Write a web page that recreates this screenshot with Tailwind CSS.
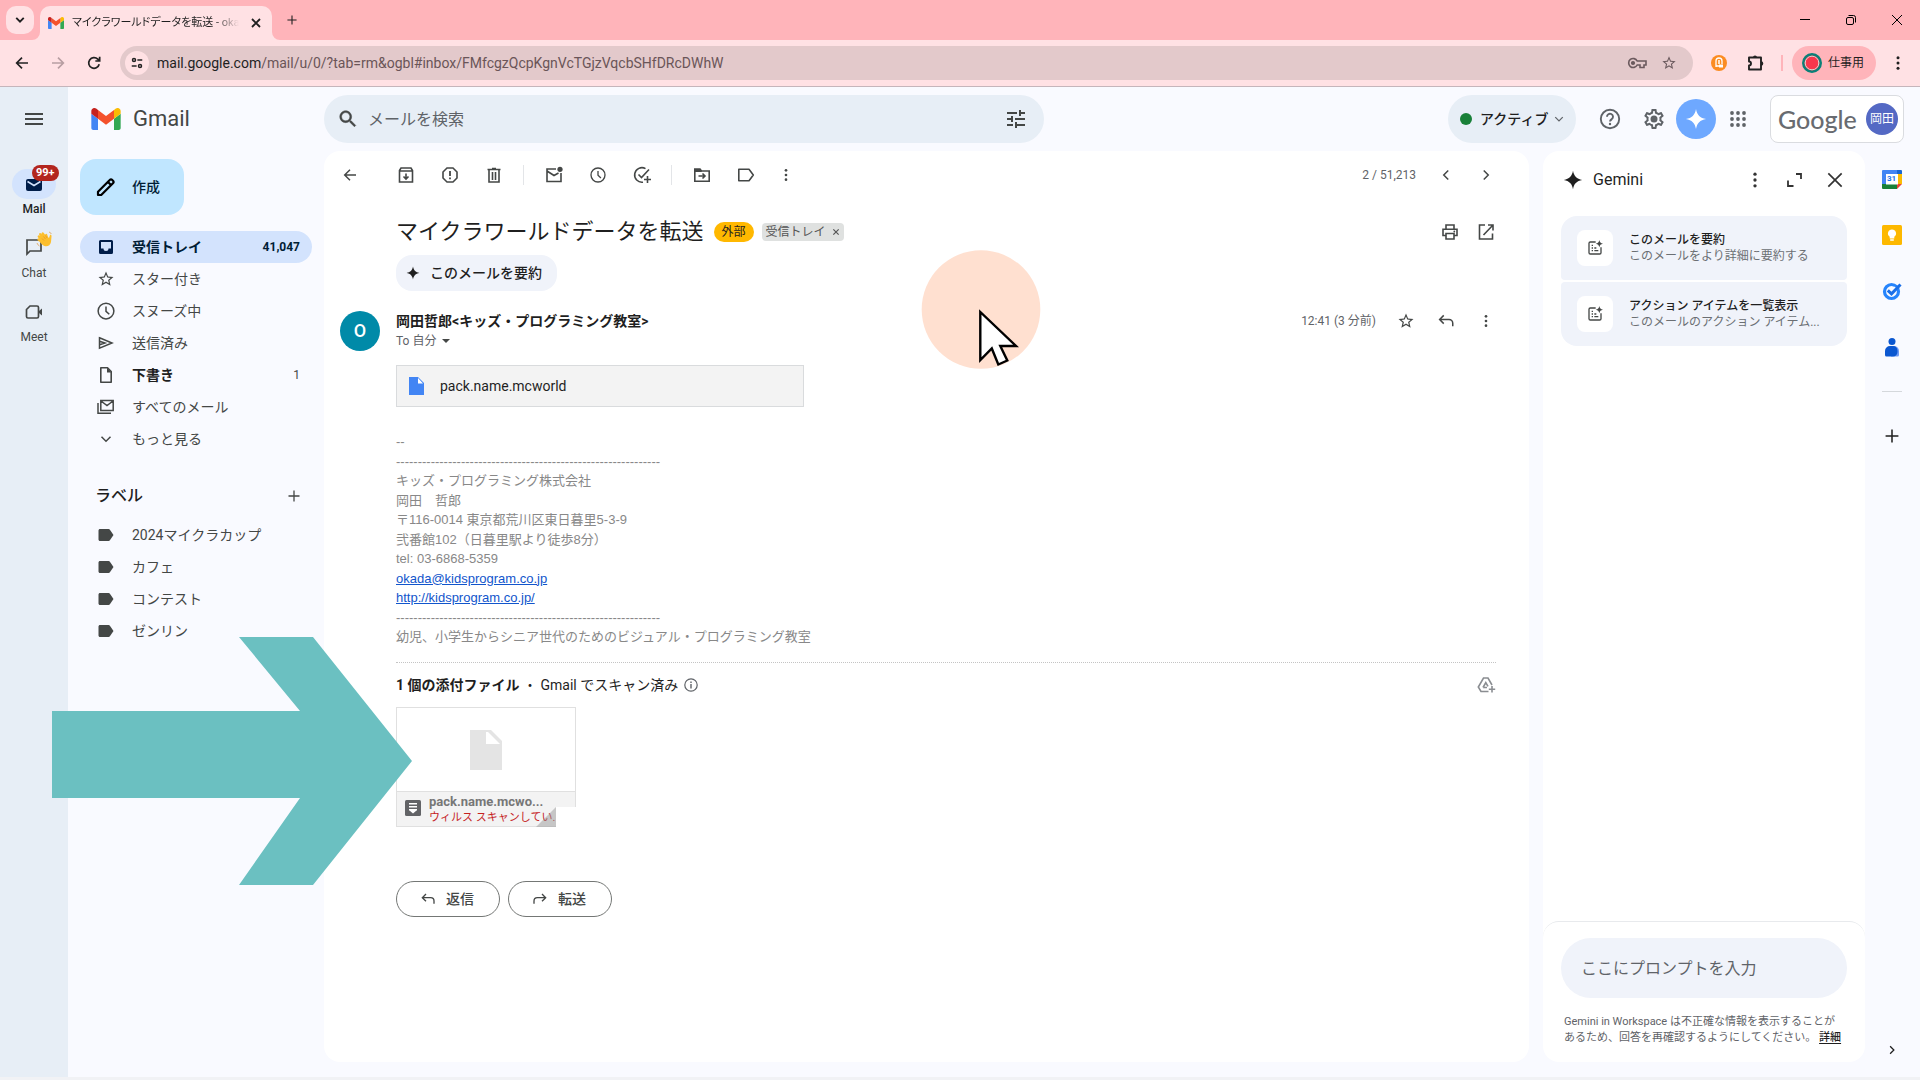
<!DOCTYPE html>
<html lang="ja">
<head>
  <meta charset="UTF-8" />
  <meta name="viewport" content="width=device-width, initial-scale=1.0" />
  <title>マイクラワールドデータを転送 - Gmail</title>
  <script src="https://cdn.jsdelivr.net/npm/@tailwindcss/browser@4"></script>
</head>
<body class="relative flex min-h-screen flex-col overflow-x-hidden bg-[#f9faff] [font-family:Roboto,'Noto_Sans_CJK_JP',sans-serif] text-sm text-[#1f1f1f]">

  <!-- Icon sprite -->
  <svg class="hidden" xmlns="http://www.w3.org/2000/svg">
    <symbol id="gmail" viewBox="52 42 88 66">
      <path fill="#4285f4" d="M58 108h14V74L52 59v43c0 3.32 2.69 6 6 6" />
      <path fill="#34a853" d="M120 108h14c3.32 0 6-2.69 6-6V59l-20 15" />
      <path fill="#fbbc04" d="M120 48v26l20-15v-8c0-7.42-8.47-11.65-14.4-7.2" />
      <path fill="#f4512c" d="M72 74V48l24 18 24-18v26L96 92" />
      <path fill="#c5221f" d="M52 51v8l20 15V48l-5.6-4.2c-5.94-4.45-14.4-.22-14.4 7.2" />
    </symbol>
    <symbol id="star" viewBox="0 0 24 24"><path fill="currentColor" d="M22 9.24l-7.19-.62L12 2 9.19 8.63 2 9.24l5.46 4.73L5.82 21 12 17.27 18.18 21l-1.63-7.03L22 9.24zM12 15.4l-3.76 2.27 1-4.28-3.32-2.88 4.38-.38L12 6.1l1.71 4.04 4.38.38-3.32 2.88 1 4.28L12 15.4z" /></symbol>
    <symbol id="dots" viewBox="0 0 24 24"><g fill="currentColor"><circle cx="12" cy="5" r="2" /><circle cx="12" cy="12" r="2" /><circle cx="12" cy="19" r="2" /></g></symbol>
    <symbol id="spark" viewBox="0 0 24 24"><path fill="currentColor" d="M12 1C13.2 7.6 16.4 10.8 23 12C16.4 13.2 13.2 16.4 12 23C10.8 16.4 7.6 13.2 1 12C7.6 10.8 10.8 7.6 12 1Z" /></symbol>
    <symbol id="clock" viewBox="0 0 24 24"><g fill="none" stroke="currentColor" stroke-width="2"><circle cx="12" cy="12" r="10.500" /><path d="M12 6v6.4l4.4 4" /></g></symbol>
    <symbol id="reply" viewBox="0 0 24 24"><path fill="none" stroke="currentColor" stroke-width="2" d="M9 4.5L3.5 10L9 15.5M3.8 10H16a5 5 0 0 1 5 5v4" /></symbol>
    <symbol id="plus" viewBox="0 0 24 24"><path fill="none" stroke="currentColor" stroke-width="2.600" d="M12 1v22M1 12h22" /></symbol>
    <symbol id="close" viewBox="0 0 24 24"><path fill="none" stroke="currentColor" stroke-width="2" d="M4 4l16 16M20 4L4 20" /></symbol>
    <symbol id="closebold" viewBox="0 0 24 24"><path fill="none" stroke="currentColor" stroke-width="3.600" d="M4 4l16 16M20 4L4 20" /></symbol>
    <symbol id="down" viewBox="0 0 24 24"><path fill="none" stroke="currentColor" stroke-width="3" d="M3 7.500l9 9l9-9" /></symbol>
    <symbol id="right" viewBox="0 0 24 24"><path fill="none" stroke="currentColor" stroke-width="3" d="M7.500 3L16.500 12l-9 9" /></symbol>
    <symbol id="back" viewBox="0 0 24 24"><path fill="none" stroke="currentColor" stroke-width="2.200" d="M21 12H4M12 4l-8 8l8 8" /></symbol>
    <symbol id="tag" viewBox="0 0 24 24"><path fill="currentColor" d="M4 4h11.500c.7 0 1.300.3 1.700.9L22 12l-4.800 7.100c-.4.6-1 .9-1.700.9H4c-1.100 0-2-.9-2-2V6c0-1.100.9-2 2-2z" /></symbol>
    <symbol id="note" viewBox="0 0 24 24"><path fill="none" stroke="currentColor" stroke-width="2" d="M13 3H5a2 2 0 0 0-2 2v14a2 2 0 0 0 2 2h14a2 2 0 0 0 2-2v-8M7 8h2M7 12h2M7 16h2M11 12h3M11 16h6" /><path fill="currentColor" d="M18.500 0c.7 3.600 1.900 4.800 5.500 5.500c-3.600.7-4.800 1.900-5.500 5.500c-.7-3.600-1.900-4.800-5.500-5.500c3.600-.7 4.800-1.900 5.500-5.500z" /></symbol>
  </svg>

  <!-- Tab strip -->
  <div class="flex h-10 items-end bg-[#ffb4ba]">
    <button aria-label="タブを検索" class="mb-1.5 ml-1.5 flex size-7 items-center justify-center rounded-[10px] bg-[#ffe1e4]">
      <svg class="size-2.5" viewBox="0 0 24 24"><path fill="none" stroke="currentColor" stroke-width="4.500" d="M3 7l9 9l9-9" /></svg>
    </button>
    <div class="relative ml-1.5 flex h-[34px] w-58 items-center rounded-t-[10px] bg-[#ffe1e4] pr-2 pl-2">
      <svg class="absolute bottom-0 -left-2 size-2 text-[#ffe1e4]" viewBox="0 0 8 8"><path fill="currentColor" d="M8 0v8H0a8 8 0 0 0 8-8z" /></svg>
      <svg class="absolute -right-2 bottom-0 size-2 text-[#ffe1e4]" viewBox="0 0 8 8"><path fill="currentColor" d="M0 0v8h8a8 8 0 0 1-8-8z" /></svg>
      <svg class="h-3 w-4"><use href="#gmail" /></svg>
      <span class="ml-2 w-[167px] overflow-hidden mask-r-from-85% text-[11px] leading-5 whitespace-nowrap [font-feature-settings:'palt']">マイクラワールドデータを転送 - okad</span>
      <button aria-label="タブを閉じる" class="ml-auto flex size-4 items-center justify-center"><svg class="size-3"><use href="#closebold" /></svg></button>
    </div>
    <button aria-label="新しいタブ" class="mb-3 ml-3 flex size-4 items-center justify-center"><svg class="size-2.5"><use href="#plus" /></svg></button>
    <div class="mb-3 ml-auto flex items-center gap-[30px] pr-[15px]">
      <button aria-label="最小化" class="size-4"><svg viewBox="0 0 16 16"><path stroke="#000" d="M3 7.500h10" /></svg></button>
      <button aria-label="元に戻す" class="size-4"><svg viewBox="0 0 16 16" fill="none" stroke="#000"><rect x="3.500" y="5.500" width="7" height="7" rx="1.500" /><path d="M5.500 3.500h5a2 2 0 0 1 2 2v5" /></svg></button>
      <button aria-label="閉じる" class="size-4"><svg viewBox="0 0 16 16"><path stroke="#000" d="M3 3l10 10M13 3L3 13" /></svg></button>
    </div>
  </div>

  <!-- Address bar -->
  <div class="flex h-[47px] items-center border-b border-[#c5b5bb] bg-[#ffe1e4]">
    <div class="flex gap-5 pr-[18px] pl-3.5">
      <button aria-label="戻る" class="size-4"><svg viewBox="0 0 24 24"><path fill="none" stroke="#222" stroke-width="2.500" d="M21 12H4M12 4l-8 8l8 8" /></svg></button>
      <button aria-label="進む" class="size-4"><svg viewBox="0 0 24 24"><path fill="none" stroke="#b89ea2" stroke-width="2.500" d="M3 12h17M12 4l8 8l-8 8" /></svg></button>
      <button aria-label="再読み込み" class="size-4"><svg viewBox="0 0 24 24"><path fill="none" stroke="#222" stroke-width="2.600" d="M19.800 14A8 8 0 1 1 17.700 6.300L20 8.500M20.500 2.500v6.500h-6.500" /></svg></button>
    </div>
    <div class="flex h-[34px] flex-1 items-center rounded-full bg-[#e3c9cb] pr-4 pl-[5px]">
      <button aria-label="サイト情報" class="flex size-6 items-center justify-center rounded-full bg-[#ffe1e4]">
        <svg class="size-3" viewBox="0 0 16 16" fill="none" stroke="#222" stroke-width="2"><circle cx="4" cy="4" r="2" /><path d="M8.500 4H15M1 12h6.500" /><circle cx="12" cy="12" r="2" /></svg>
      </button>
      <div class="ml-2 flex-1 text-sm text-[#6a5558]"><span class="text-[#1f1f1f]">mail.google.com</span>/mail/u/0/?tab=rm&amp;ogbl#inbox/FMfcgzQcpKgnVcTGjzVqcbSHfDRcDWhW</div>
      <button aria-label="パスワード" class="h-4 w-5"><svg viewBox="0 0 20 16" fill="none" stroke="#6b5a5e" stroke-width="1.600"><path d="M10.200 6A4.500 4.500 0 1 0 10.200 10H13v2.500h4V10h2V6z" /><circle cx="6" cy="8" r="1.300" fill="#6b5a5e" /></svg></button>
      <button aria-label="ブックマーク" class="ml-3.5 size-4 text-[#6b5a5e]"><svg class="size-4"><use href="#star" /></svg></button>
    </div>
    <div class="flex items-center pl-[18px]">
      <svg class="size-4" viewBox="0 0 16 16"><circle cx="8" cy="8" r="8" fill="#fb8c22" /><path fill="none" stroke="#fff" stroke-width="1.300" d="M5 12V6a3 3 0 0 1 6 0v3M7 6h2M7 8h2M5 11h4" /><path fill="#fff" d="M8 9.500h4v3H8z" /></svg>
      <button aria-label="拡張機能" class="ml-5 size-[18px]"><svg viewBox="0 0 18 18"><path fill="none" stroke="#222" stroke-width="1.900" stroke-linejoin="round" d="M2 3.500h12v12H2v-4a2 2 0 0 0 0-4z" /><path fill="#222" d="M6 3.500a2 2 0 0 1 4 0zM14 7.200a2.300 2.300 0 0 1 0 4.600z" /></svg></button>
      <span class="ml-4 h-4 w-0.5 bg-[#ffb4ba]"></span>
      <button class="ml-[9px] flex h-[34px] items-center rounded-full bg-[#ffb4ba] pr-3 pl-2.5 text-xs">
        <svg class="mr-1.5 size-5" viewBox="0 0 20 20"><circle cx="10" cy="10" r="8.800" fill="#f9364d" stroke="#0a8078" stroke-width="2.400" /><circle cx="10" cy="10" r="6.800" fill="none" stroke="#d9dcd6" stroke-width="1" /></svg>
        仕事用
      </button>
      <button aria-label="設定" class="mx-[13px] size-[18px]"><svg class="size-[18px]"><use href="#dots" /></svg></button>
    </div>
  </div>

  <div class="flex flex-1">
    <!-- App rail -->
    <nav class="flex w-17 shrink-0 flex-col items-center bg-[#e7eef6] text-xs leading-4 text-[#444746]">
      <button aria-label="メインメニュー" class="mt-[22px] h-5 w-6"><svg viewBox="0 0 24 20"><path stroke="#444746" stroke-width="2" d="M3 5h18M3 10h18M3 15h18" /></svg></button>
      <a href="#mail" class="relative mt-10 flex flex-col items-center font-medium text-[#1f1f1f]">
        <span class="flex h-[30px] w-11 items-center justify-center rounded-full bg-[#d3e3fd]">
          <svg class="h-4 w-4" viewBox="0 0 16 16"><path fill="#001d49" d="M2 3h12a2 2 0 0 1 2 2v8a2 2 0 0 1-2 2H2a2 2 0 0 1-2-2V5a2 2 0 0 1 2-2z" /><path fill="none" stroke="#d3e3fd" stroke-width="1.500" d="M1.500 5.500L8 9.500l6.500-4" /></svg>
        </span>
        <span class="absolute -top-1 left-5 rounded-full bg-[#b3261e] px-1 text-[11px] font-bold text-white">99+</span>
        <span class="mt-0.5">Mail</span>
      </a>
      <a href="#chat" class="relative mt-5 flex flex-col items-center">
        <svg class="size-5" viewBox="0 0 20 20"><path fill="none" stroke="#444746" stroke-width="1.700" d="M3 3h14v11H6l-3 3z" /></svg>
        <!-- Waving hand -->
        <svg class="absolute -top-1.5 left-3.5 size-4" viewBox="0 0 16 16"><g fill="none" stroke="#fcbf2d" stroke-width="2.300" stroke-linecap="round"><path d="M7 9L2.800 5.500M8 7.500L4.200 3.200M9.500 6.500L6.700 2.500M11.500 8L10.200 4M6 11L2.500 8.500" /></g><path fill="#fcbf2d" d="M5 9l5-4 3 2 1-3c1-.5 1.600.3 1.500 1.500L15 11c-.5 3-3 4.500-5.500 4.200C7 15 5.500 13 4 11z" /><path fill="none" stroke="#e08a1e" stroke-width=".6" d="M6 7.500l2 2M7.500 5.500l2 2.500M9.500 4.500l1.500 2.500M1 12q.5 2 2.500 3M13 1q1.800.5 2.300 2" /></svg>
        <span class="mt-2">Chat</span>
      </a>
      <a href="#meet" class="mt-[21px] flex flex-col items-center">
        <svg class="size-5" viewBox="0 0 20 20"><path fill="none" stroke="#444746" stroke-width="1.700" d="M6 4h7a1.500 1.500 0 0 1 1.500 1.500v9A1.500 1.500 0 0 1 13 16H4a1.500 1.500 0 0 1-1.500-1.500V7.500z" /><path fill="#444746" d="M15 9l3-2.500v7L15 11z" /></svg>
        <span class="mt-[7px]">Meet</span>
      </a>
    </nav>

    <div class="flex min-w-0 flex-1 flex-col">
      <!-- Header -->
      <header class="flex h-16 items-center pr-4">
        <a href="#inbox" class="flex w-64 shrink-0 items-center pl-[23px] text-[#444746]">
          <svg class="h-[22px] w-[30px]"><use href="#gmail" /></svg>
          <span class="ml-3 text-[22px] leading-6">Gmail</span>
        </a>
        <form class="flex h-12 w-[720px] items-center rounded-full bg-[#e7eef6] pr-4 pl-[13px] text-[#444746]">
          <button type="button" aria-label="検索" class="size-[22px]"><svg viewBox="0 0 24 24"><path fill="currentColor" stroke="currentColor" stroke-width=".5" d="M15.500 14h-.79l-.28-.27C15.410 12.590 16 11.110 16 9.500 16 5.910 13.090 3 9.500 3S3 5.910 3 9.500 5.910 16 9.500 16c1.610 0 3.090-.59 4.230-1.570l.27.28v.79l5 4.990L20.490 19l-4.990-5zm-6 0C7.010 14 5 11.990 5 9.500S7.010 5 9.500 5 14 7.010 14 9.500 11.990 14 9.500 14z" /></svg></button>
          <input type="text" aria-label="メールを検索" placeholder="メールを検索" class="ml-[9px] h-10 min-w-0 flex-1 text-base outline-none placeholder:text-[#5f6368]" />
          <button type="button" aria-label="検索オプション" class="size-6"><svg viewBox="0 0 24 24"><path fill="currentColor" d="M3 17v2h6v-2H3zM3 5v2h10V5H3zm10 16v-2h8v-2h-8v-2h-2v6h2zM7 9v2H3v2h4v2h2V9H7zm14 4v-2H11v2h10zm-6-4h2V7h4V5h-4V3h-2v6z" /></svg></button>
        </form>
        <div class="ml-auto flex items-center text-[#5f6368]">
          <button class="flex h-12 w-32 items-center rounded-full bg-[#e7eef6] pl-3 font-medium text-[#1f1f1f]">
            <span class="size-3 rounded-full bg-[#188038]"></span>
            <span class="ml-2">アクティブ</span>
            <svg class="ml-1.5 size-2.5 text-[#5f6368]"><use href="#down" /></svg>
          </button>
          <button aria-label="サポート" class="ml-3.5 flex size-10 items-center justify-center">
            <svg class="size-6" viewBox="0 0 24 24"><g fill="none" stroke="currentColor" stroke-width="1.900"><circle cx="12" cy="12" r="9.200" /><path d="M9 9.800a3 3 0 1 1 4.800 2.300c-1.100.8-1.800 1.300-1.800 2.500" /></g><circle cx="12" cy="17" r="1.200" fill="currentColor" /></svg>
          </button>
          <button aria-label="設定" class="ml-1 flex size-10 items-center justify-center">
            <svg class="size-6" viewBox="0 0 24 24" fill="currentColor"><path d="M19.430 12.980c.04-.32.07-.64.07-.98 0-.34-.03-.66-.07-.98l2.110-1.650c.19-.15.24-.42.12-.64l-2-3.460c-.09-.16-.26-.25-.44-.25-.06 0-.12.010-.17.030l-2.490 1c-.52-.4-1.080-.73-1.690-.98l-.38-2.650C14.460 2.180 14.250 2 14 2h-4c-.25 0-.46.180-.49.420l-.38 2.650c-.61.250-1.170.590-1.690.980l-2.490-1c-.06-.02-.12-.03-.18-.03-.17 0-.34.090-.43.250l-2 3.460c-.13.220-.07.490.12.640l2.110 1.650c-.04.320-.07.650-.07.980 0 .330.030.660.070.980l-2.110 1.650c-.19.150-.24.420-.12.640l2 3.460c.09.160.26.250.44.250.06 0 .12-.01.17-.03l2.490-1c.52.400 1.080.730 1.690.980l.38 2.650c.03.240.24.420.49.420h4c.25 0 .46-.18.49-.42l.38-2.650c.61-.25 1.170-.59 1.690-.98l2.490 1c.06.020.12.030.18.030.17 0 .34-.09.43-.25l2-3.460c.12-.22.07-.49-.12-.64l-2.110-1.650zm-1.980-1.710c.04.310.05.520.05.730 0 .210-.02.430-.05.730l-.14 1.130.89.700 1.080.840-.7 1.210-1.270-.51-1.040-.42-.9.680c-.43.320-.84.560-1.250.730l-1.060.430-.16 1.130-.2 1.350h-1.400l-.19-1.350-.16-1.130-1.060-.43c-.43-.18-.83-.41-1.230-.71l-.91-.7-1.060.430-1.270.510-.7-1.210 1.080-.84.890-.7-.14-1.130c-.03-.31-.05-.54-.05-.74s.02-.43.050-.73l.14-1.130-.89-.7-1.080-.84.7-1.210 1.270.510 1.040.420.9-.68c.43-.32.84-.56 1.250-.73l1.060-.43.16-1.130.2-1.350h1.390l.19 1.350.16 1.130 1.060.430c.43.180.83.410 1.230.710l.91.700 1.060-.43 1.270-.51.7 1.210-1.070.850-.89.700.14 1.130z" /><circle cx="12" cy="12" r="3.500" /></svg>
          </button>
          <button aria-label="Gemini に相談" class="ml-0.5 flex size-10 items-center justify-center rounded-full bg-[#6ea8ff] text-white"><svg class="size-[22px]"><use href="#spark" /></svg></button>
          <button aria-label="Google アプリ" class="ml-0.5 flex size-10 items-center justify-center">
            <svg class="size-4" viewBox="0 0 16 16" fill="currentColor"><circle cx="2" cy="2" r="1.900" /><circle cx="8" cy="2" r="1.900" /><circle cx="14" cy="2" r="1.900" /><circle cx="2" cy="8" r="1.900" /><circle cx="8" cy="8" r="1.900" /><circle cx="14" cy="8" r="1.900" /><circle cx="2" cy="14" r="1.900" /><circle cx="8" cy="14" r="1.900" /><circle cx="14" cy="14" r="1.900" /></svg>
          </button>
          <a href="#account" class="ml-3 flex h-12 w-[134px] items-center justify-between rounded-lg border border-[#dadce0] bg-white pr-[5px] pl-[7px]">
            <span class="[font-family:Lato,sans-serif] text-[25px] leading-8 font-medium text-[#686b70]">Google</span>
            <span class="flex size-8 items-center justify-center rounded-full bg-[#5469c4] text-xs text-white">岡田</span>
          </a>
        </div>
      </header>

      <div class="flex flex-1 pb-[15px]">
        <!-- Mail navigation -->
        <nav class="w-64 shrink-0 pt-2 pr-3 pl-3 text-[#1f1f1f]">
          <button class="flex h-14 w-26 items-center rounded-2xl bg-[#c0e6ff] pl-4 font-medium text-[#001d35]">
            <svg class="size-5" viewBox="0 0 20 20"><path fill="none" stroke="#000" stroke-width="2.200" stroke-linejoin="round" d="M2 18v-3.200L14 2.800a1.400 1.400 0 0 1 2 0l1.200 1.200a1.400 1.400 0 0 1 0 2L5.200 18zM12 5l3 3" /></svg>
            <span class="ml-4">作成</span>
          </button>
          <ul class="mt-4 text-[#444746]">
            <li><a href="#inbox" class="flex h-8 items-center rounded-full bg-[#d3e3fd] pr-3 pl-4 font-bold text-[#001d35]">
              <svg class="size-5" viewBox="0 0 20 20"><path fill="#001d49" fill-rule="evenodd" d="M4.500 3h11A1.500 1.500 0 0 1 17 4.500v11a1.500 1.500 0 0 1-1.500 1.500h-11A1.500 1.500 0 0 1 3 15.500v-11A1.500 1.500 0 0 1 4.500 3zM5 5v6.500h2.500a2.500 2.500 0 0 0 5 0H15V5z" /></svg>
              <span class="ml-4">受信トレイ</span><span class="ml-auto text-xs">41,047</span></a></li>
            <li><a href="#starred" class="flex h-8 items-center pr-3 pl-4">
              <svg class="size-5"><use href="#star" x="1" y="1" width="18" height="18" /></svg><span class="ml-4">スター付き</span></a></li>
            <li><a href="#snoozed" class="flex h-8 items-center pr-3 pl-4">
              <svg class="size-5"><use href="#clock" x="1" y="1" width="18" height="18" /></svg><span class="ml-4">スヌーズ中</span></a></li>
            <li><a href="#sent" class="flex h-8 items-center pr-3 pl-4">
              <svg class="size-5" viewBox="0 0 20 20"><path fill="none" stroke="currentColor" stroke-width="1.500" d="M3.500 4.800L16 10L3.500 15.200zM3.500 8.200L9 10l-5.500 1.800" /></svg><span class="ml-4">送信済み</span></a></li>
            <li><a href="#drafts" class="flex h-8 items-center pr-3 pl-4">
              <svg class="size-5" viewBox="0 0 20 20"><path fill="none" stroke="currentColor" stroke-width="1.600" stroke-linejoin="round" d="M5 2.800h6.500L15.200 6.500v10.700H4.800V2.800z" /><path fill="currentColor" d="M11 2.500V7.500h4.500z" /></svg><span class="ml-4 font-bold text-[#1f1f1f]">下書き</span><span class="ml-auto text-xs">1</span></a></li>
            <li><a href="#all" class="flex h-8 items-center pr-3 pl-4">
              <svg class="size-5" viewBox="0 0 20 20"><path fill="none" stroke="currentColor" stroke-width="1.500" d="M4.800 3.500h12.400v10H4.800zM5 4l6 4.500L17 4M2 6v10.300h13" /></svg><span class="ml-4">すべてのメール</span></a></li>
            <li><a href="#more" class="flex h-8 items-center pr-3 pl-4">
              <svg class="size-5"><use href="#down" x="4" y="4" width="12" height="12" /></svg><span class="ml-4">もっと見る</span></a></li>
          </ul>
          <div class="mt-[29px] flex h-6 items-center pr-2.5 pl-[15px]">
            <h2 class="text-base font-medium">ラベル</h2>
            <button aria-label="新しいラベルを作成" class="ml-auto flex size-4 items-center justify-center text-[#444746]"><svg class="size-3"><use href="#plus" /></svg></button>
          </div>
          <ul class="mt-[11px] text-[#444746]">
            <li><a href="#label1" class="flex h-8 items-center pl-4"><svg class="size-5"><use href="#tag" x="1" y="1" width="18" height="18" /></svg><span class="ml-4">2024マイクラカップ</span></a></li>
            <li><a href="#label2" class="flex h-8 items-center pl-4"><svg class="size-5"><use href="#tag" x="1" y="1" width="18" height="18" /></svg><span class="ml-4">カフェ</span></a></li>
            <li><a href="#label3" class="flex h-8 items-center pl-4"><svg class="size-5"><use href="#tag" x="1" y="1" width="18" height="18" /></svg><span class="ml-4">コンテスト</span></a></li>
            <li><a href="#label4" class="flex h-8 items-center pl-4"><svg class="size-5"><use href="#tag" x="1" y="1" width="18" height="18" /></svg><span class="ml-4">ゼンリン</span></a></li>
          </ul>
        </nav>

        <!-- Message -->
        <main class="min-w-0 flex-1 rounded-2xl bg-white pr-[33px] pl-4">
          <div class="flex h-12 items-center text-[#444746]">
            <button aria-label="受信トレイに戻る" class="mr-9 flex size-5 items-center justify-center"><svg class="size-4"><use href="#back" /></svg></button>
            <div class="flex gap-6">
              <button aria-label="アーカイブ" class="size-5"><svg viewBox="0 0 20 20"><path fill="none" stroke="currentColor" stroke-width="1.600" d="M3.500 5.500L5 3h10l1.500 2.500V17h-13zM3 6h14M10 8.500v5M7.500 11.500l2.500 2.500l2.500-2.500" /></svg></button>
              <button aria-label="迷惑メールを報告" class="size-5"><svg viewBox="0 0 20 20"><path fill="none" stroke="currentColor" stroke-width="1.600" d="M7 3h6l4 4v6l-4 4H7l-4-4V7z" /><path stroke="currentColor" stroke-width="1.800" d="M10 6v5M10 12.500v1.800" /></svg></button>
              <button aria-label="削除" class="size-5"><svg viewBox="0 0 20 20"><path fill="none" stroke="currentColor" stroke-width="1.600" d="M5 5v12h10V5M3.500 4.500h13M8 3.500h4M8.500 7v8M11.500 7v8" /></svg></button>
            </div>
            <span class="mr-5 ml-[19px] h-5 w-px bg-[#e3e5e8]"></span>
            <div class="flex gap-6">
              <button aria-label="未読にする" class="size-5"><svg viewBox="0 0 20 20"><path fill="none" stroke="currentColor" stroke-width="1.600" d="M12 4H3v12.500h14V8M3 6l7 4.500L14.500 8" /><circle cx="16" cy="4.300" r="2.600" fill="currentColor" /></svg></button>
              <button aria-label="スヌーズ" class="flex size-5 items-center justify-center"><svg class="size-4"><use href="#clock" /></svg></button>
              <button aria-label="ToDo リストに追加" class="size-5"><svg viewBox="0 0 20 20"><path fill="none" stroke="currentColor" stroke-width="1.600" d="M11 17.200A7.300 7.300 0 1 1 13.500 3.600M6.500 9.500l3 3L17 4.500M15.500 11v7M12 14.500h7" /></svg></button>
            </div>
            <span class="mr-5 ml-[19px] h-5 w-px bg-[#e3e5e8]"></span>
            <div class="flex gap-6">
              <button aria-label="移動" class="size-5"><svg viewBox="0 0 20 20"><path fill="none" stroke="currentColor" stroke-width="1.600" d="M2.800 5v11.200h14.400V6H9.500L8 4H2.800zM6.500 11h6M10.500 8.500L13 11l-2.500 2.500" /><path fill="currentColor" d="M2 4h6l2 3H2z" /></svg></button>
              <button aria-label="ラベル" class="size-5"><svg viewBox="0 0 20 20"><path fill="none" stroke="currentColor" stroke-width="1.600" stroke-linejoin="round" d="M2.800 4.300H13L17.300 10L13 15.700H2.800z" /></svg></button>
            </div>
            <button aria-label="その他" class="ml-5 flex size-5 items-center justify-center"><svg class="size-4"><use href="#dots" /></svg></button>
            <span class="ml-auto text-xs text-[#5f6368]">2 / 51,213</span>
            <button aria-label="新しい" class="ml-5 flex size-5 items-center justify-center"><svg class="size-3 rotate-180"><use href="#right" /></svg></button>
            <button aria-label="古い" class="ml-5 flex size-5 items-center justify-center"><svg class="size-3"><use href="#right" /></svg></button>
          </div>

          <div class="mt-[17px] ml-14 flex h-8 items-center">
            <h1 class="text-[22px] leading-8">マイクラワールドデータを転送</h1>
            <span class="ml-2.5 flex h-5 items-center rounded-full bg-[#ffb800] px-2 text-xs">外部</span>
            <span class="ml-2 flex h-[18px] items-center rounded-sm bg-[#dfe1e0] pr-1 pl-1 text-xs text-[#555]">受信トレイ<button aria-label="ラベルを削除" class="ml-1.5"><svg class="size-2"><use href="#closebold" /></svg></button></span>
            <button aria-label="印刷" class="ml-auto size-5 text-[#444746]"><svg viewBox="0 0 20 20"><path fill="none" stroke="currentColor" stroke-width="1.600" d="M6 7V3h8v4M5.500 13.500H3V7.300h14v6.200h-2.500M6 11.500h8V17H6z" /><circle cx="14.300" cy="9.500" r=".9" fill="currentColor" /></svg></button>
            <button aria-label="新しいウィンドウで開く" class="ml-4 size-5 text-[#444746]"><svg viewBox="0 0 20 20"><path fill="none" stroke="currentColor" stroke-width="1.600" d="M9 3H3.500v14h13v-5.500M12 3h5v5.500M17 3l-9.500 10" /></svg></button>
          </div>

          <button class="mt-[7px] ml-14 flex h-9 items-center rounded-2xl bg-[#f0f3fa] pr-[15px] pl-2.5 font-medium">
            <svg class="size-3.5"><use href="#spark" /></svg>
            <span class="ml-2.5">このメールを要約</span>
          </button>

          <div class="mt-5 flex">
            <div class="mr-4 flex size-10 shrink-0 items-center justify-center rounded-full bg-[#008aa8] text-lg font-medium text-white">O</div>
            <div>
              <div class="leading-5 font-bold">岡田哲郎&lt;キッズ・プログラミング教室&gt;</div>
              <button class="flex items-center text-xs leading-5 text-[#5f6368]">To 自分<svg class="ml-1.5 h-1 w-2" viewBox="0 0 8 4"><path fill="#444746" d="M0 0h8L4 4z" /></svg></button>
            </div>
            <div class="ml-auto flex h-5 items-center text-[#444746]">
              <span class="text-xs text-[#5f6368]">12:41 (3 分前)</span>
              <button aria-label="スターを付ける" class="ml-5 flex size-5 items-center justify-center"><svg class="size-[18px]"><use href="#star" /></svg></button>
              <button aria-label="返信" class="ml-5 flex size-5 items-center justify-center"><svg class="size-[18px]"><use href="#reply" /></svg></button>
              <button aria-label="その他" class="ml-5 flex size-5 items-center justify-center"><svg class="size-4"><use href="#dots" /></svg></button>
            </div>
          </div>

          <div class="ml-14">
            <a href="#file" class="mt-3.5 flex h-[42px] w-[408px] items-center border border-[#d9dbdd] bg-[#f3f3f3] pl-3">
              <svg class="h-[18px] w-[15px]" viewBox="0 0 15 18"><path fill="#4285f4" d="M0 0h9l6 6v12H0z" /><path fill="#fff" d="M9 1v5.500h5z" /></svg>
              <span class="ml-4">pack.name.mcworld</span>
            </a>

            <div class="mt-[25px] [font-family:'Liberation_Sans','Noto_Sans_CJK_JP',sans-serif] text-[13px] leading-normal text-[#888]">
              <p>--</p>
              <p>-------------------------------------------------------------</p>
              <p>キッズ・プログラミング株式会社</p>
              <p>岡田　哲郎</p>
              <p>〒116-0014 東京都荒川区東日暮里5-3-9</p>
              <p>弐番館102（日暮里駅より徒歩8分）</p>
              <p>tel: 03-6868-5359</p>
              <p><a href="#okada" class="text-[#1155cc] underline">okada@kidsprogram.co.jp</a></p>
              <p><a href="#site" class="text-[#1155cc] underline">http://kidsprogram.co.jp/</a></p>
              <p>-------------------------------------------------------------</p>
              <p>幼児、小学生からシニア世代のためのビジュアル・プログラミング教室</p>
            </div>

            <!-- Attachments -->
            <div class="mt-[15px] flex items-center border-t border-dotted border-[#c4c4c4] pt-2.5 leading-6">
              <h2 class="font-bold">1 個の添付ファイル</h2>
              <span class="whitespace-pre"> ・ Gmail でスキャン済み</span>
              <svg class="ml-1.5 size-3.5" viewBox="0 0 14 14"><circle cx="7" cy="7" r="6.200" fill="none" stroke="#5f6368" stroke-width="1.200" /><path stroke="#5f6368" stroke-width="1.400" d="M7 6v4.500M7 3.500v1.400" /></svg>
              <button aria-label="ドライブに追加" class="ml-auto size-5"><svg viewBox="0 0 20 20"><path fill="none" stroke="#8a8d91" stroke-width="1.600" d="M12.500 16.500H5L2.300 12L7.500 3h4.500l4 7M7 12.500L9.800 7.500l2.200 3.800M7 12.500h4M16 11v6.500M12.800 14.200h6.400" /></svg></button>
            </div>
            <a href="#download" class="relative mt-2.5 flex h-30 w-45 flex-col border border-[#e0e0e0]">
              <span class="flex h-[84px] items-center justify-center pt-0.5">
                <svg class="h-10 w-8" viewBox="0 0 32 40"><path fill="#e4e4e4" d="M0 0h21l11 11v29H0z" /><path fill="#fff" d="M16 2v12h14L18 2z" /></svg>
              </span>
              <span class="flex flex-1 items-start border-t border-[#e0e0e0] bg-[#f3f3f3] pl-2">
                <svg class="mt-2 size-4 shrink-0" viewBox="0 0 16 16"><rect width="16" height="16" rx="1.500" fill="#626366" /><path fill="#fff" d="M4 3h8v1.500H4zM4 6h8v1.500H4zM4 9h8v1.500H4zM4.500 10.500h7L8 13.500z" /></svg>
                <span class="ml-2 w-[127px] overflow-hidden whitespace-nowrap">
                  <span class="mt-0.5 block text-[13px] leading-4 font-bold text-[#777]">pack.name.mcwo...</span>
                  <span class="block text-[11px] leading-4 text-[#c5221f]">ウィルス スキャンしてい.</span>
                </span>
              </span>
              <!-- Folded corner -->
              <svg class="absolute -right-px -bottom-px h-5 w-10" viewBox="0 0 40 20"><path fill="#999" fill-opacity=".5" d="M20 0v20H0z" /><path fill="#fff" d="M20 0h20v20H20z" /></svg>
            </a>

            <div class="mt-[54px] flex gap-2 font-medium text-[#444746]">
              <button class="flex h-9 w-26 items-center rounded-full border border-[#747775] pl-[23px]"><svg class="size-4"><use href="#reply" /></svg><span class="ml-2.5">返信</span></button>
              <button class="flex h-9 w-26 items-center rounded-full border border-[#747775] pl-[23px]"><svg class="size-4 -scale-x-100"><use href="#reply" /></svg><span class="ml-2.5">転送</span></button>
            </div>
          </div>
        </main>

        <!-- Gemini panel -->
        <aside class="ml-3.5 flex w-[322px] shrink-0 flex-col rounded-2xl bg-white">
          <div class="mt-[9px] flex h-10 items-center pr-5 pl-5">
            <svg class="size-5"><use href="#spark" /></svg>
            <h2 class="ml-2.5 text-base">Gemini</h2>
            <div class="ml-auto flex gap-5 text-[#333]">
              <button aria-label="その他" class="flex size-5 items-center justify-center"><svg class="size-5"><use href="#dots" /></svg></button>
              <button aria-label="展開" class="size-5"><svg viewBox="0 0 20 20"><path fill="none" stroke="currentColor" stroke-width="1.800" d="M11 4h5v5M3 10.500V16h5.500" /></svg></button>
              <button aria-label="閉じる" class="flex size-5 items-center justify-center"><svg class="size-5"><use href="#close" /></svg></button>
            </div>
          </div>
          <div class="mt-4 flex flex-col gap-0.5 px-[18px] text-left text-xs leading-4">
            <button class="flex h-16 items-center rounded-t-2xl rounded-b-sm bg-[#f0f3fa] pl-4 text-left">
              <span class="flex size-9 items-center justify-center rounded-lg bg-white text-[#444746]"><svg class="size-4"><use href="#note" /></svg></span>
              <span class="ml-4"><span class="block font-medium">このメールを要約</span><span class="block text-[#6b6f73]">このメールをより詳細に要約する</span></span>
            </button>
            <button class="flex h-16 items-center rounded-t-sm rounded-b-2xl bg-[#f0f3fa] pl-4 text-left">
              <span class="flex size-9 items-center justify-center rounded-lg bg-white text-[#444746]"><svg class="size-4"><use href="#note" /></svg></span>
              <span class="ml-4"><span class="block font-medium">アクション アイテムを一覧表示</span><span class="block text-[#6b6f73]">このメールのアクション アイテム...</span></span>
            </button>
          </div>
          <div class="mt-auto rounded-2xl border-t border-[#e8eaed] px-[18px] pt-4 pb-4">
            <input type="text" aria-label="プロンプト" placeholder="ここにプロンプトを入力" class="h-15 w-full rounded-full bg-[#f0f3fa] px-5 text-base outline-none placeholder:text-[#5f6368]" />
            <p class="mt-4 px-[3px] text-[11px] leading-4 text-[#5f6368]">Gemini in Workspace は不正確な情報を表示することがあるため、回答を再確認するようにしてください。 <a href="#details" class="font-medium text-[#1f1f1f] underline underline-offset-2">詳細</a></p>
          </div>
        </aside>

        <!-- Side panel apps -->
        <div class="flex w-[55px] shrink-0 flex-col items-center pt-[18px] pr-0.5">
          <a href="#calendar" aria-label="カレンダー" class="relative size-5">
            <svg viewBox="0 0 20 20"><path fill="#4285f4" d="M0 2a1 1 0 0 1 1-1h14v4H5v11H0z" /><path fill="#1967d2" d="M15 1h4a1 1 0 0 1 1 1v3h-5z" /><path fill="#fbbc04" d="M15 5h5v10h-5z" /><path fill="#188038" d="M0 15h15v5H1a1 1 0 0 1-1-1z" /><path fill="#ea4335" d="M15 15h5l-5 5z" /><path fill="#fff" d="M4 5h12v10.500H4z" /></svg>
            <span class="absolute inset-0 text-center text-[8px] leading-5 font-bold text-[#1a73e8]">31</span>
          </a>
          <a href="#keep" aria-label="Keep" class="mt-9 size-5"><svg viewBox="0 0 20 20"><rect width="20" height="20" rx="1.500" fill="#fdb800" /><path fill="#fff" d="M10 4.500a4 4 0 0 0-2.300 7.300V13.500h4.600v-1.700A4 4 0 0 0 10 4.500zM8.200 14.300h3.600v1.500H8.200z" /></svg></a>
          <a href="#tasks" aria-label="ToDo リスト" class="mt-9 size-5"><svg viewBox="0 0 20 20"><circle cx="9.500" cy="10.500" r="7" fill="none" stroke="#2684fc" stroke-width="3.200" /><path fill="none" stroke="#f9faff" stroke-width="4" d="M9.500 11.500L14 7" /><path fill="none" stroke="#1a6fe8" stroke-width="3" d="M5.800 9.300l3.700 3.600L18.500 3.500" /></svg></a>
          <a href="#contacts" aria-label="連絡先" class="mt-9 size-5"><svg viewBox="0 0 20 20"><circle cx="10" cy="4.500" r="3.500" fill="#0b57d0" /><path fill="#6f9bf5" d="M9 9h3a5 5 0 0 1 5 5v4a1.500 1.500 0 0 1-1.500 1.500H9z" /><path fill="#0b57d0" d="M8 9h3a4.500 4.500 0 0 1 4.500 4.500V15a4.500 4.500 0 0 1-4.500 4.500H4.500A1.500 1.500 0 0 1 3 18v-4a5 5 0 0 1 5-5z" /></svg></a>
          <span class="mt-[34px] h-px w-5 bg-[#d5d8dc]"></span>
          <button aria-label="アドオンを取得" class="mt-9 flex size-4 items-center justify-center"><svg class="size-3.5"><use href="#plus" /></svg></button>
          <button aria-label="サイドパネルを非表示" class="mt-auto mb-1 flex size-4 items-center justify-center"><svg class="size-2.5"><use href="#right" /></svg></button>
        </div>
      </div>
    </div>
  </div>
  <div class="h-[3px] bg-[#f1f2f5]"></div>

  <!-- Annotation arrow -->
  <svg class="pointer-events-none absolute top-[637px] left-[52px] h-[248px] w-[360px]" viewBox="0 0 360 248"><path fill="#6bc0c1" d="M0 74h248L187 0h74l99 124l-99 124h-74l61-87H0z" /></svg>

  <!-- Highlighted mouse pointer -->
  <svg class="pointer-events-none absolute top-[249px] left-[921px] size-30" viewBox="0 0 120 120"><circle cx="60" cy="60.500" r="59.300" fill="#ffe0d0" /><path fill="#fff" stroke="#000" stroke-width="2.400" d="M59.300 63v48l11.500-11.500l6.500 16l9-4l-7-14.500H95z" /></svg>
</body>
</html>
